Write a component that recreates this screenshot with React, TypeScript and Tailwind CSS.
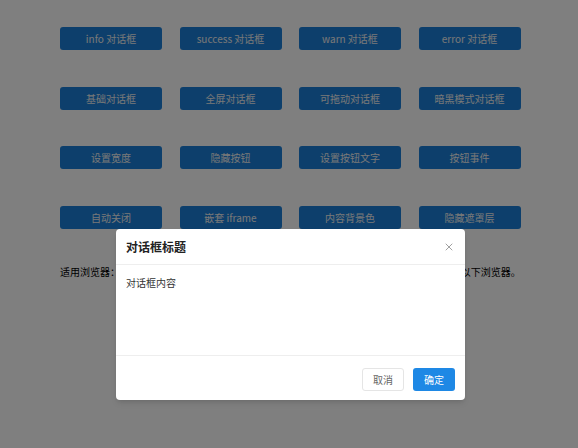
import { X } from 'lucide-react'

const buttons = [
  'info 对话框', 'success 对话框', 'warn 对话框', 'error 对话框',
  '基础对话框', '全屏对话框', '可拖动对话框', '暗黑模式对话框',
  '设置宽度', '隐藏按钮', '设置按钮文字', '按钮事件',
  '自动关闭', '嵌套 iframe', '内容背景色', '隐藏遮罩层',
]

const font = { fontFamily: '"Microsoft YaHei", "Noto Sans CJK SC", "Liberation Sans", sans-serif' }

export default function App() {
  return (
    <div className="relative w-[578px] h-[448px] bg-white overflow-hidden" style={font}>
      <div className="pt-[27px] pl-[60px]">
        <div className="grid grid-cols-[repeat(4,102px)] gap-x-[17.5px] gap-y-[36.5px]">
          {buttons.map((b) => (
            <button
              key={b}
              className="h-[23px] rounded-[3px] bg-[#1b7fd8] text-[#f0f0f0] text-[10px] leading-[23px]"
            >
              {b}
            </button>
          ))}
        </div>
        <p className="mt-[36px] text-[10px] leading-[14px] text-black whitespace-nowrap">
          适用浏览器：Chrome、Firefox、Safari、Opera、Edge、QQ 浏览器等，暂不支持 IE 10 及以下浏览器。
        </p>
      </div>

      {/* mask */}
      <div className="absolute inset-0 bg-black/50" />

      {/* dialog */}
      <div className="absolute left-[116px] top-[229px] w-[349px] h-[171px] bg-white rounded-[4px] shadow-md flex flex-col">
        <div className="h-[36px] flex items-center justify-between px-[10px] border-b border-[#eeeeee]">
          <span className="text-[12px] font-bold text-[#222]">对话框标题</span>
          <X className="w-[12px] h-[12px] text-[#666]" strokeWidth={1.25} />
        </div>
        <div className="flex-1 px-[10px] pt-[10px] text-[10px] text-[#333] border-b border-[#eeeeee]">
          对话框内容
        </div>
        <div className="h-[44px] flex items-start justify-end gap-[9px] pt-[12px] pr-[10px]">
          <button className="w-[42px] h-[23px] rounded-[3px] border border-[#e5e5e5] bg-white text-[10px] text-[#666]">
            取消
          </button>
          <button className="w-[42px] h-[23px] rounded-[3px] bg-[#1e88e5] text-[10px] text-white">
            确定
          </button>
        </div>
      </div>
    </div>
  )
}
